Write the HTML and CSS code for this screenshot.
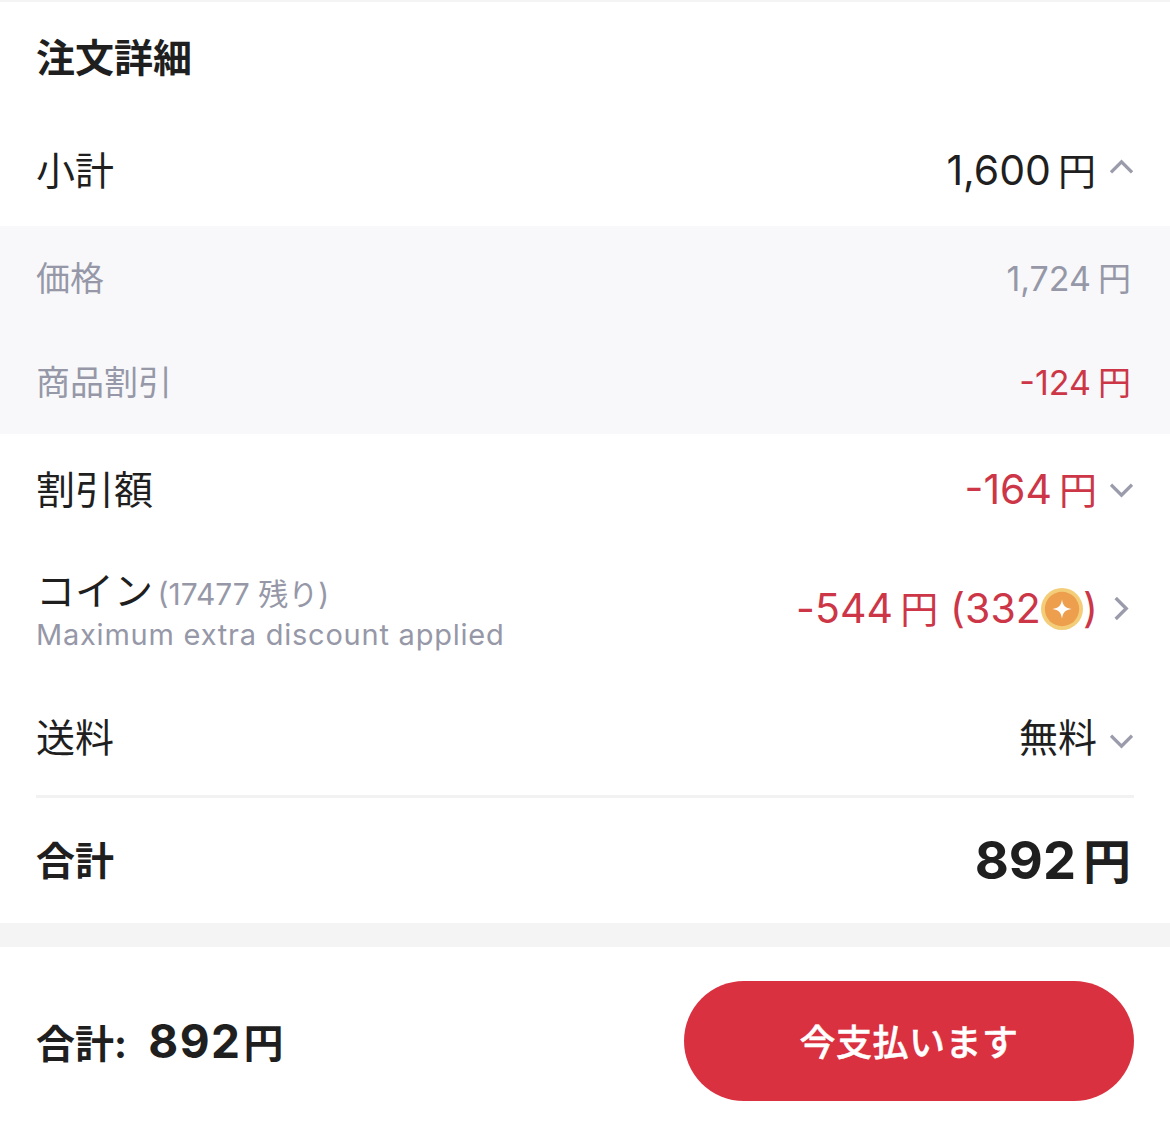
FILE: index.html
```html
<!DOCTYPE html>
<html lang="ja">
<head>
    <meta charset="UTF-8">
    <meta name="viewport" content="width=device-width, initial-scale=1.0">
    <title>注文詳細</title>
    <link rel="stylesheet" href="styles.css">
</head>
<body>
    <section class="details">
        <h2 class="title">注文詳細</h2>

        <div class="row row-subtotal">
            <span class="label">小計</span>
            <span class="value">
                <span class="amount">1,600<span class="yen">円</span></span>
                <svg class="chev" viewBox="0 0 24 24"><path d="M1 16 12 5l11 11"/></svg>
            </span>
        </div>

        <div class="breakdown">
            <div class="sub-row">
                <span class="sub-label">価格</span>
                <span>1,724<span class="yen">円</span></span>
            </div>
            <div class="sub-row">
                <span class="sub-label">商品割引</span>
                <span class="red">-124<span class="yen">円</span></span>
            </div>
        </div>

        <div class="row row-discount">
            <span class="label">割引額</span>
            <span class="value red">
                <span class="amount">-164<span class="yen">円</span></span>
                <svg class="chev chev-down" viewBox="0 0 24 24"><path d="M1 8l11 11L23 8"/></svg>
            </span>
        </div>

        <div class="row row-coin">
            <div class="coin-info">
                <div class="coin-top"><span class="label">コイン</span> <span class="coin-left">(17477 残り)</span></div>
                <div class="coin-note">Maximum extra discount applied</div>
            </div>
            <span class="value red">
                <span class="coin-amount">-544<span class="yen">円</span> (332<svg class="coin" viewBox="0 0 44 44"><circle cx="22" cy="22" r="22" fill="#f3cd78"/><circle cx="22" cy="22" r="18" fill="#ee9f4d"/><path d="M22 12c1 6.500 3.500 9 10 10-6.500 1-9 3.500-10 10-1-6.500-3.500-9-10-10 6.500-1 9-3.500 10-10z" fill="#fff"/></svg>)</span>
                <svg class="chev chev-right" viewBox="0 0 24 24"><path d="M8 1l11 11L8 23"/></svg>
            </span>
        </div>

        <div class="row row-shipping">
            <span class="label">送料</span>
            <span class="value">
                <span class="free">無料</span>
                <svg class="chev chev-down" viewBox="0 0 24 24"><path d="M1 8l11 11L23 8"/></svg>
            </span>
        </div>

        <div class="total">
            <span class="total-label">合計</span>
            <span class="total-value">892<span class="yen">円</span></span>
        </div>
    </section>

    <footer class="pay-bar">
        <span class="pay-total">合計: <span class="pay-num">892</span><span class="yen">円</span></span>
        <button class="pay-btn" type="button">今支払います</button>
    </footer>
</body>
</html>
```

FILE: styles.css
```css
* {
    box-sizing: border-box;
}
body {
    font-family: Inter, "Noto Sans CJK JP", sans-serif;
    background-color: #f4f4f4;
    color: #1f1f1f;
    margin: 0;
    padding: 0;
}
.details {
    background-color: #fff;
    margin-top: 2px;
}
.title {
    font-size: 39px;
    font-weight: 700;
    line-height: 56px;
    margin: 0;
    padding: 28px 36px 0;
    height: 84px;
}
.row {
    display: flex;
    justify-content: space-between;
    align-items: center;
    height: 104px;
    padding: 0 37px 0 36px;
}
.row-subtotal {
    height: 140px;
    padding-top: 24px;
}
.row-discount {
    height: 106px;
}
.label {
    font-size: 39px;
}
.value {
    display: flex;
    align-items: center;
    font-size: 41px;
    line-height: 56px;
}
.amount {
    padding-top: 5px;
}
.yen {
    margin-left: 7px;
    font-size: 38px;
}
.free {
    font-size: 39px;
}
.red {
    color: #cc3647;
}
.chev {
    width: 23px;
    height: 23px;
    margin-left: 14px;
    fill: none;
    stroke: #9a9cab;
    stroke-width: 3.5;
}
.chev-down {
    margin-left: 13px;
    margin-top: 3px;
}
.chev-right {
    margin-left: 18px;
    margin-right: 2px;
}
.breakdown {
    background-color: #f8f8fb;
}
.sub-row {
    display: flex;
    justify-content: space-between;
    align-items: center;
    height: 104px;
    padding: 0 39px 2px 36px;
    font-size: 34px;
    color: #9698a8;
}
.sub-label {
    padding-bottom: 2px;
}
.sub-row .yen {
    font-size: 33px;
}
.row-coin {
    height: 151px;
    padding-bottom: 14px;
}
.coin-info {
    padding-top: 8px;
}
.coin-top {
    line-height: 44px;
    height: 44px;
}
.coin-left {
    font-size: 30px;
    color: #9698a8;
}
.coin-note {
    font-size: 29px;
    line-height: 44px;
    color: #9698a8;
    letter-spacing: 0.77px;
}
.coin-amount {
    white-space: nowrap;
    letter-spacing: 0.1px;
}
.coin {
    width: 42px;
    height: 42px;
    vertical-align: -7px;
}
.row-coin .chev {
    margin-left: 10px;
}
.row-shipping {
    padding-bottom: 16px;
}
.row-shipping .value {
    padding-top: 6px;
}
.total {
    display: flex;
    justify-content: space-between;
    align-items: center;
    height: 128px;
    margin: 0 36px;
    padding-bottom: 6px;
    border-top: 3px solid #f2f2f2;
}
.total-label {
    font-size: 39px;
    font-weight: 700;
}
.total-value {
    font-size: 52.5px;
    font-weight: 700;
    margin-right: 3px;
}
.total-value .yen {
    font-size: 48px;
}
.pay-bar {
    display: flex;
    justify-content: space-between;
    align-items: center;
    height: 190px;
    margin-top: 24px;
    padding: 0 36px 2px;
    background-color: #fff;
}
.pay-total {
    font-size: 39px;
    font-weight: 700;
    margin-bottom: 1px;
}
.pay-num {
    margin-left: 12px;
    font-size: 46px;
    letter-spacing: 1.5px;
}
.pay-total .yen {
    margin-left: 2px;
    font-size: 40px;
}
.pay-btn {
    width: 450px;
    height: 120px;
    padding-bottom: 4px;
    border: none;
    border-radius: 60px;
    background-color: #da3140;
    color: #fff;
    font-family: inherit;
    font-size: 36px;
    font-weight: 500;
    letter-spacing: 0.5px;
    -webkit-text-stroke: 0.5px #fff;
}
```
